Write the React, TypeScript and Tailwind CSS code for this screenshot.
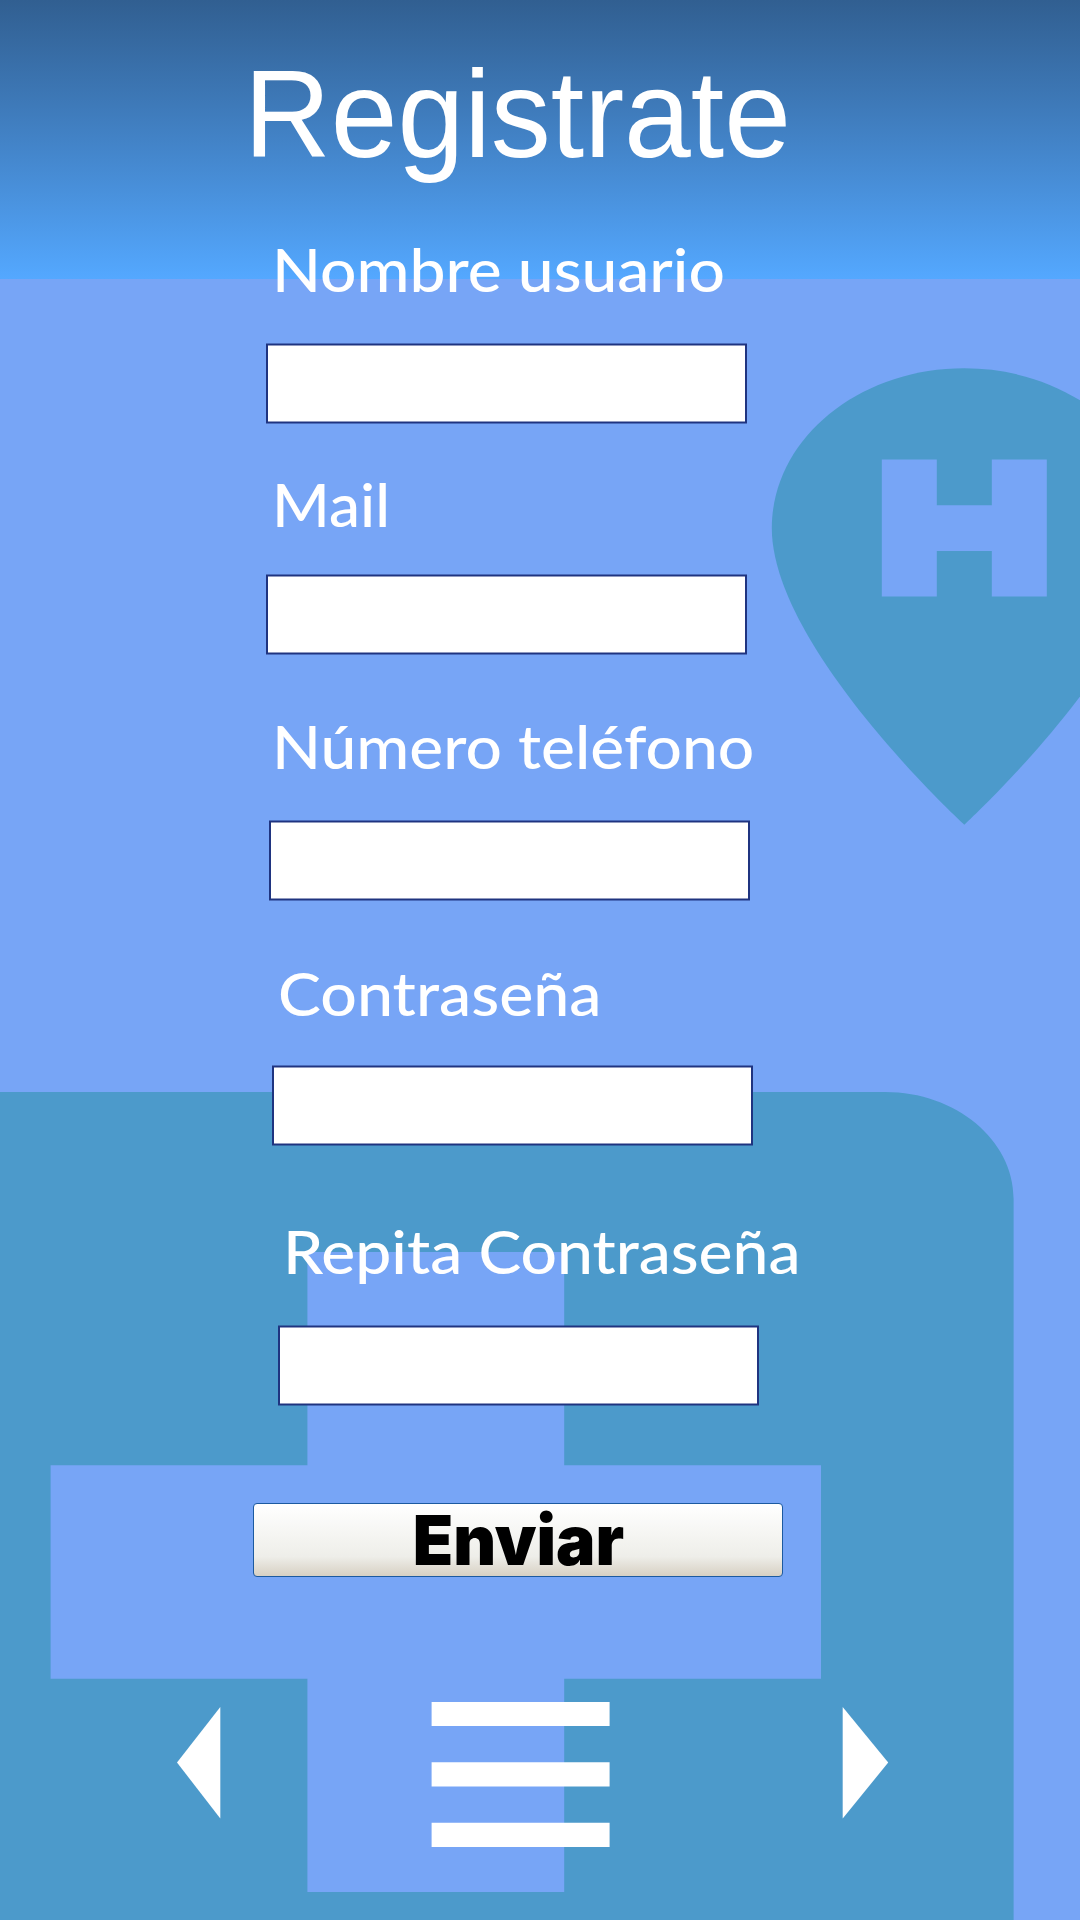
import React from "react";

type Field = {
  id: string;
  label: string;
  type: string;
  group: string;
  labelClass: string;
  inputClass: string;
};

const fields: Field[] = [
  { id: "user", label: "Nombre usuario", type: "text", group: "mt-[63px] gap-[45px]", labelClass: "ml-[272px] scale-x-[1.068]", inputClass: "ml-[266px]" },
  { id: "mail", label: "Mail", type: "email", group: "mt-[51px] gap-[41px]", labelClass: "ml-[272px] scale-x-[1.035]", inputClass: "ml-[266px]" },
  { id: "phone", label: "Número teléfono", type: "tel", group: "mt-[62px] gap-[45px]", labelClass: "ml-[272px] scale-x-[1.068]", inputClass: "ml-[269px]" },
  { id: "password", label: "Contraseña", type: "password", group: "mt-[63px] gap-[43px]", labelClass: "ml-[278px] scale-x-[1.074]", inputClass: "ml-[272px]" },
  { id: "repeat", label: "Repita Contraseña", type: "password", group: "mt-[76px] gap-[45px]", labelClass: "ml-[283px] scale-x-[1.069]", inputClass: "ml-[278px]" },
];

function Backdrop() {
  return (
    <div className="absolute inset-0" aria-hidden="true">
      <div className="h-[279px] bg-linear-to-b from-[#315f91] to-[#54a8ff]" />
      <svg className="absolute inset-0" width="1080" height="1920" viewBox="0 0 1080 1920">
        <g transform="translate(634.3 322.7) scale(27.5 22.82)">
          <path fill="#4c9acb" d="M12 2C8.13 2 5 5.13 5 9c0 5.25 7 13 7 13s7-7.75 7-13c0-3.87-3.13-7-7-7z" />
          <path fill="#77a5f6" d="M9 6h2v2h2V6h2v6h-2v-2h-2v2H9z" />
        </g>
        <path
          transform="translate(-334.6 932) scale(64.2 53.333)"
          fill="#4c9acb"
          d="M19 3H5c-1.1 0-1.99.9-1.99 2L3 19c0 1.1.9 2 2 2h14c1.1 0 2-.9 2-2V5c0-1.1-.9-2-2-2zm-1 11h-4v4h-4v-4H6v-4h4V6h4v4h4v4z"
        />
      </svg>
    </div>
  );
}

export default function App() {
  return (
    <div className="relative h-[1920px] w-[1080px] overflow-hidden bg-[#77a5f6]">
      <Backdrop />
      <main className="relative flex flex-col items-start pt-[51px]">
        <h1 className="ml-[243.5px] origin-left scale-x-[0.96] whitespace-nowrap font-['Liberation_Sans',sans-serif] text-[125px] leading-[125px] text-white">
          Registrate
        </h1>
        <form className="flex flex-col items-start">
          {fields.map((f) => (
            <div key={f.id} className={`flex flex-col items-start ${f.group}`}>
              <label
                htmlFor={f.id}
                className={`origin-left whitespace-nowrap font-['Lato',sans-serif] text-[60px] leading-[60px] font-medium text-white ${f.labelClass}`}
              >
                {f.label}
              </label>
              <input
                id={f.id}
                type={f.type}
                className={`block h-[79px] w-[481px] border-x-2 border-y border-[#1f3480] bg-white shadow-[0_-1px_0_#1f348080,0_1px_0_#1f348080,inset_0_1px_0_#1f348080,inset_0_-1px_0_#1f348080] outline-none ${f.inputClass}`}
              />
            </div>
          ))}
          <button
            type="button"
            className="mt-[98px] ml-[253px] flex h-[74px] w-[530px] items-center justify-center rounded-[4px] border border-[#1c5aa0] bg-[linear-gradient(180deg,#ffffff_0%,#eeeee9_73%,#d7d0c3_100%)] font-['Inter',sans-serif] text-[69px] leading-[69px] font-black text-black"
          >
            <span className="scale-x-[0.958]">Enviar</span>
          </button>
        </form>
        <nav className="mt-[125px] ml-[177px] flex h-[146px] items-start">
          <svg className="mt-[5px]" width="44" height="112" viewBox="0 0 44 112">
            <path fill="#fff" d="M0 55.5 43.3 0v111.5z" />
          </svg>
          <svg className="ml-[210px]" width="179" height="146" viewBox="0 0 179 146">
            <path fill="#fff" d="M.6 0h178v24H.6zM.6 60.3h178v24.2H.6zM.6 120.7h178V145H.6z" />
          </svg>
          <svg className="mt-[5px] ml-[232px]" width="47" height="112" viewBox="0 0 47 112">
            <path fill="#fff" d="M46.2 55.5.7 0v111.5z" />
          </svg>
        </nav>
      </main>
    </div>
  );
}
